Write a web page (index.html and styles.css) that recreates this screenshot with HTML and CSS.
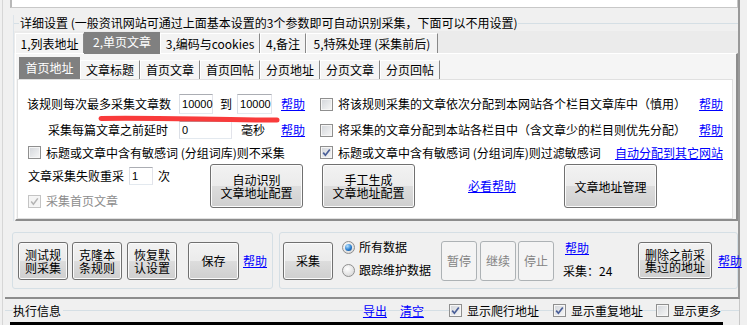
FILE: index.html
```html
<!DOCTYPE html>
<html lang="zh-CN">
<head>
  <meta charset="UTF-8">
  <title>采集规则设置</title>
  <link rel="stylesheet" href="styles.css">
</head>
<body>
<div class="frame">
  <div class="upper">
    <div class="prev-box"></div>

    <div class="detail">
      <div class="group-title"><span>详细设置 (一般资讯网站可通过上面基本设置的3个参数即可自动识别采集，下面可以不用设置)</span></div>

      <div class="tabs">
        <div class="tab t1">1,列表地址</div>
        <div class="tab t2 active">2,单页文章</div>
        <div class="tab t3">3,编码与cookies</div>
        <div class="tab t4">4,备注</div>
        <div class="tab t5">5,特殊处理 (采集前后)</div>
      </div>

      <div class="tab-page">
        <div class="subtabs">
          <div class="subtab active">首页地址</div>
          <div class="subtab">文章标题</div>
          <div class="subtab">首页文章</div>
          <div class="subtab">首页回帖</div>
          <div class="subtab">分页地址</div>
          <div class="subtab">分页文章</div>
          <div class="subtab">分页回帖</div>
        </div>

        <div class="sheet">
          <svg class="scribble" width="190" height="14" viewBox="0 0 190 14">
            <path d="M6 6.5 C 60 5.5, 120 8, 182 8" fill="none" stroke="#f93b3b" stroke-width="5" stroke-linecap="round"/>
          </svg>

          <div class="form">
            <div class="row">
              <span>该规则每次最多采集文章数</span>
              <span class="txt w-max1">10000</span>
              <span class="to">到</span>
              <span class="txt w-max2">10000</span>
              <a class="help-a">帮助</a>
            </div>
            <div class="row split">
              <span class="chk"><span class="cb"></span><span>将该规则采集的文章依次分配到本网站各个栏目文章库中（慎用）</span></span>
              <a>帮助</a>
            </div>

            <div class="row">
              <span class="delay-label">采集每篇文章之前延时</span>
              <span class="txt short w-delay">0</span>
              <span class="unit">毫秒</span>
              <a class="help-b">帮助</a>
            </div>
            <div class="row split">
              <span class="chk"><span class="cb"></span><span>将采集的文章分配到本站各栏目中（含文章少的栏目则优先分配）</span></span>
              <a>帮助</a>
            </div>

            <div class="row">
              <span class="chk first"><span class="cb"></span><span>标题或文章中含有敏感词 (分组词库)则不采集</span></span>
            </div>
            <div class="row split">
              <span class="chk"><span class="cb on"><svg viewBox="0 0 11 11" width="11" height="11"><path d="M2.2 5.6 L4.4 8.2 L8.8 2.4" fill="none" stroke="#4a5f98" stroke-width="1.7"/></svg></span><span>标题或文章中含有敏感词 (分组词库)则过滤敏感词</span></span>
              <a>自动分配到其它网站</a>
            </div>
          </div>

          <div class="row-d">
            <div class="stack">
              <div class="line1">
                <span>文章采集失败重采</span>
                <span class="txt short w-retry">1</span>
                <span class="unit-n">次</span>
              </div>
              <div class="line2">
                <span class="chk first dim"><span class="cb off"><svg viewBox="0 0 11 11" width="11" height="11"><path d="M2.2 5.6 L4.4 8.2 L8.8 2.4" fill="none" stroke="#b4b4b4" stroke-width="1.5"/></svg></span><span>采集首页文章</span></span>
              </div>
            </div>
            <div class="btn big">自动识别<br>文章地址配置</div>
            <div class="btn big b-hand">手工生成<br>文章地址配置</div>
            <a class="must-read">必看帮助</a>
            <div class="btn big b-manage">文章地址管理</div>
          </div>
        </div>
      </div>
    </div>

    <div class="actions">
      <div class="group g-left">
        <div class="btn sm">测试规<br>则采集</div>
        <div class="btn sm b-clone">克隆本<br>条规则</div>
        <div class="btn sm b-reset">恢复默<br>认设置</div>
        <div class="btn sm b-save">保存</div>
        <a class="g-help">帮助</a>
      </div>
      <div class="group g-right">
        <div class="btn sm">采集</div>
        <div class="radios">
          <div class="radio-row"><span class="rd on"></span><span>所有数据</span></div>
          <div class="radio-row"><span class="rd"></span><span>跟踪维护数据</span></div>
        </div>
        <div class="btn off">暂停</div>
        <div class="btn off b-go">继续</div>
        <div class="btn off b-stop">停止</div>
        <div class="info">
          <a>帮助</a>
          <span class="count">采集：24</span>
        </div>
        <div class="btn del">删除之前采<br>集过的地址</div>
        <a class="del-help">帮助</a>
      </div>
    </div>
  </div>

  <div class="log">
    <div class="log-head">
      <span class="log-title">执行信息</span>
      <a class="l-export">导出</a>
      <a class="l-clear">清空</a>
      <span class="chk l-c1"><span class="cb on"><svg viewBox="0 0 11 11" width="11" height="11"><path d="M2.2 5.6 L4.4 8.2 L8.8 2.4" fill="none" stroke="#4a5f98" stroke-width="1.7"/></svg></span><span>显示爬行地址</span></span>
      <span class="chk l-c2"><span class="cb on"><svg viewBox="0 0 11 11" width="11" height="11"><path d="M2.2 5.6 L4.4 8.2 L8.8 2.4" fill="none" stroke="#4a5f98" stroke-width="1.7"/></svg></span><span>显示重复地址</span></span>
      <span class="chk l-c3"><span class="cb"></span><span>显示更多</span></span>
    </div>
    <div class="log-body"></div>
  </div>
</div>
</body>
</html>
```

FILE: styles.css
```css
* {
  box-sizing: border-box;
}

body {
  margin: 0;
  width: 747px;
  height: 325px;
  overflow: hidden;
  background: #f0f0f0;
  font-family: "Noto Sans CJK SC", "Noto Sans", sans-serif;
  font-size: 12px;
  line-height: 14px;
  color: #000;
}

a {
  color: #0000ff;
  text-decoration: underline;
  white-space: nowrap;
}

/* outer frames */
.frame {
  margin-left: 2px;
  padding-left: 2px;
  border-left: 1px solid #d6d6d6;
  height: 325px;
}

.upper {
  width: 735px;
  height: 299px;
  border-right: 2px solid #999;
  border-bottom: 2px solid #8c8c8c;
}

.prev-box {
  margin-left: 5px;
  width: 728px;
  height: 8px;
  background: #fff;
  border-left: 2px solid #b8b8b8;
  border-right: 1px solid #c8c8c8;
  border-bottom: 1px solid #c8c8c8;
}

/* group box: 详细设置 */
.detail {
  margin-left: 8px;
  border-left: 1px solid #dde4ea;
}

.group-title {
  display: flex;
  align-items: center;
  height: 16px;
  margin-top: 7px;
  white-space: nowrap;
}

.group-title::before {
  content: "";
  width: 5px;
  border-top: 1px solid #d5dfe5;
}

.group-title::after {
  content: "";
  flex: 1;
  border-top: 1px solid #d5dfe5;
}

.group-title span {
  padding: 0 1px;
}

/* top tab strip */
.tabs {
  display: flex;
  align-items: flex-end;
  height: 22px;
  padding-left: 1px;
  background: #ebebeb;
}

.tab {
  height: 20px;
  line-height: 19px;
  text-align: center;
  white-space: nowrap;
  background: #f3f3f3;
  border-top: 1px solid #fff;
  border-left: 1px solid #fff;
  border-right: 1px solid #888;
  flex: none;
}

.t1 { width: 69px; }
.t2 { width: 76px; }
.t3 { width: 100px; }
.t4 { width: 46px; }
.t5 { width: 132px; }

.tab.active {
  position: relative;
  height: 22px;
  margin-bottom: -1px;
  line-height: 18px;
  background: #808080;
  color: #fff;
  border-color: #808080;
}

.tab-page {
  margin-left: 1px;
  height: 168px;
  padding: 0 3px 0 1px;
  background: #f5f5f5;
  border-top: 1px solid #fff;
  border-left: 1px solid #fff;
  border-right: 2px solid #8c8c8c;
  border-bottom: 2px solid #8c8c8c;
}

.subtabs {
  display: flex;
  align-items: flex-end;
  height: 25px;
  padding-left: 2px;
}

.subtab {
  width: 60px;
  height: 19px;
  line-height: 17px;
  text-align: center;
  border-top: 1px solid #fff;
  border-left: 1px solid #fff;
  border-right: 1px solid #888;
  flex: none;
}

.subtab.active {
  width: 61px;
  height: 22px;
  line-height: 19px;
  background: #808080;
  color: #fff;
  border-color: #808080;
}

/* white sheet with the settings */
.sheet {
  position: relative;
  height: 140px;
  padding: 13px 0 0 9px;
  background: #fff;
  border: 1px solid #e0e0e0;
}

.scribble {
  position: absolute;
  left: 77px;
  top: 32px;
}

.form {
  display: grid;
  grid-template-columns: 293px 403px;
  grid-template-rows: 22px 30px 15px;
}

.row {
  display: flex;
  align-items: center;
  white-space: nowrap;
}

.row.split {
  justify-content: space-between;
}

.txt {
  display: block;
  height: 20px;
  padding-left: 2px;
  background: #fff;
  border: 1px solid;
  border-color: #abadb3 #e2e3ea #e3e9ef #dbdfe6;
  font-family: "Liberation Sans", sans-serif;
  font-size: 11px;
  line-height: 18px;
  flex: none;
}

.txt.short {
  height: 18px;
  line-height: 16px;
}

.w-max1 { width: 34px; margin-left: 8px; }
.w-max2 { width: 35px; margin-left: 5px; }
.w-delay { width: 53px; margin-left: 11px; }
.w-retry { width: 24px; margin-left: 5px; }

.to { margin-left: 7px; }
.help-a { margin-left: 9px; }
.delay-label { margin-left: 21px; }
.unit { margin-left: 9px; }
.help-b { margin-left: 16px; }
.unit-n { margin-left: 5px; }

/* check boxes and radios */
.chk {
  display: inline-flex;
  align-items: center;
  gap: 5px;
  white-space: nowrap;
}

.chk.first {
  margin-left: 1px;
}

.chk.dim {
  color: #8d8d8d;
}

.cb {
  display: inline-flex;
  align-items: center;
  justify-content: center;
  width: 13px;
  height: 13px;
  border: 1px solid #8f8f8f;
  background: linear-gradient(135deg, #d2d5da, #f7f7f7);
  box-shadow: inset 0 0 0 1px #f6f6f6;
  flex: none;
}

.cb.off {
  border-color: #c4c4c4;
  background: #f4f4f4;
}

.rd {
  position: relative;
  width: 13px;
  height: 13px;
  border-radius: 50%;
  border: 1px solid #8f8f8f;
  background: radial-gradient(circle at 40% 35%, #fff, #d0d0d0);
  flex: none;
}

.rd.on::after {
  content: "";
  position: absolute;
  left: 2px;
  top: 2px;
  width: 7px;
  height: 7px;
  border-radius: 50%;
  background: radial-gradient(circle at 35% 30%, #b9e3ff, #2a7fd0 55%, #0d3f7c);
}

/* buttons */
.btn {
  display: flex;
  align-items: center;
  justify-content: center;
  text-align: center;
  line-height: 13px;
  border: 1px solid #707070;
  border-radius: 3px;
  background: linear-gradient(#f2f2f2, #ebebeb 50%, #dddddd 50%, #cfcfcf);
  box-shadow: inset 0 0 0 1px #fbfbfb;
  white-space: nowrap;
  flex: none;
}

.btn.big {
  width: 93px;
  height: 44px;
}

.btn.sm {
  width: 50px;
  height: 38px;
}

.btn.off {
  width: 36px;
  height: 40px;
  color: #838383;
  background: #f4f4f4;
  border-color: #adb2b5;
  box-shadow: none;
}

.btn.del {
  width: 74px;
  height: 37px;
  line-height: 12px;
  margin-left: 9px;
}

/* last row of the sheet */
.row-d {
  display: flex;
  align-items: center;
  height: 44px;
  margin-top: 4px;
}

.stack {
  align-self: flex-start;
  width: 183px;
  flex: none;
}

.line1 {
  display: flex;
  align-items: center;
  height: 24px;
  padding-left: 1px;
}

.line2 {
  display: flex;
  align-items: center;
  height: 26px;
}

.b-hand { margin-left: 19px; }
.must-read { margin-left: 53px; }
.b-manage { margin-left: 48px; }

/* bottom buttons */
.actions {
  display: flex;
  gap: 6px;
  padding: 11px 0 0 7px;
}

.group {
  display: flex;
  align-items: center;
  height: 57px;
  border: 1px solid #d5dfe5;
  border-radius: 3px;
}

.g-left {
  width: 261px;
  padding-left: 5px;
}

.b-clone { margin-left: 4px; }
.b-reset { margin-left: 5px; }
.btn.sm.b-save { margin-left: 11px; width: 51px; }
.g-help { margin-left: 4px; }

.g-right {
  width: 459px;
  padding-left: 3px;
}

.radios {
  width: 99px;
  margin: 0 0 4px 9px;
  flex: none;
}

.radio-row {
  display: flex;
  align-items: center;
  gap: 4px;
  height: 23px;
  white-space: nowrap;
}

.b-go { margin-left: 3px; }
.b-stop { margin-left: 2px; }

.info {
  display: flex;
  flex-direction: column;
  width: 66px;
  margin: 0 0 4px 9px;
  flex: none;
}

.info a {
  height: 23px;
  line-height: 23px;
  padding-left: 2px;
}

.count {
  height: 23px;
  line-height: 23px;
}

.del-help { margin-left: 6px; }

/* log area */
.log {
  width: 735px;
  height: 26px;
  border-right: 1px solid #c8c8c8;
}

.log-head {
  display: flex;
  align-items: center;
  height: 23px;
  padding: 0 18px 0 8px;
  background: linear-gradient(#d5dfe5, #d5dfe5) no-repeat 0 11px / 100% 1px;
}

.log-head > * {
  background: #f0f0f0;
}

.log-title { padding-right: 2px; }
.l-export { margin-left: auto; }
.l-clear { margin-left: 13px; }
.l-c1 { margin-left: 25px; }
.l-c2 { margin-left: 14px; }
.l-c3 { margin-left: 13px; gap: 4px; }

.log-body {
  margin-left: 5px;
  width: 713px;
  height: 3px;
  background: #000;
}
```
